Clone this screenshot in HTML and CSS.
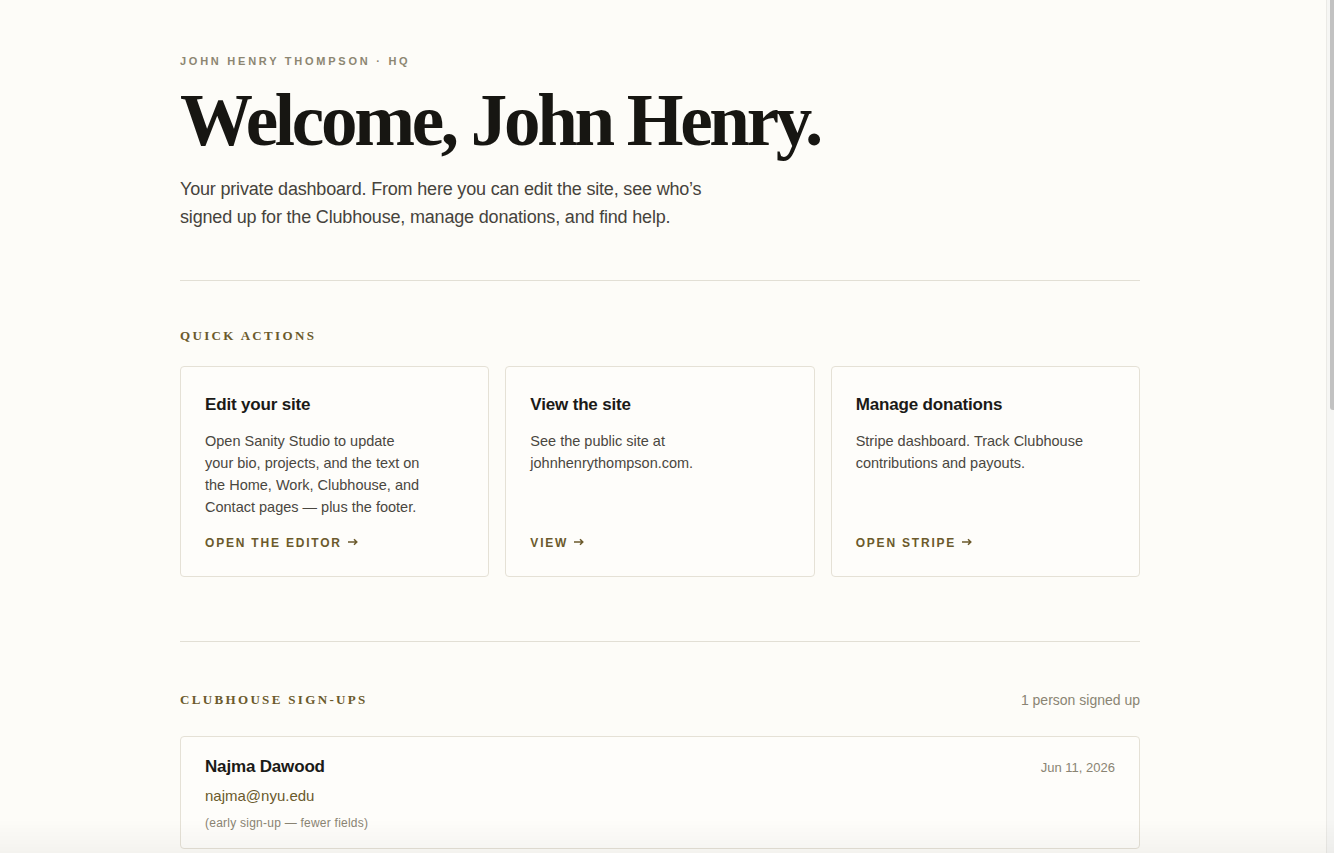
FILE: index.html
```html
<!DOCTYPE html>
<html lang="en">

<head>
    <meta charset="UTF-8">
    <title>HQ — John Henry Thompson</title>
    <link rel="stylesheet" href="styles.css">
</head>

<body>
    <main class="page">
        <!-- Intro -->
        <header class="intro">
            <p class="eyebrow">John Henry Thompson · HQ</p>
            <h1>Welcome, John Henry.</h1>
            <p class="lead">Your private dashboard. From here you can edit the site, see who’s signed up for the Clubhouse, manage donations, and find help.</p>
        </header>

        <!-- Quick actions -->
        <section class="section">
            <div class="section-head">
                <h2>Quick actions</h2>
            </div>
            <div class="actions">
                <a class="card card-edit" href="#">
                    <h3>Edit your site</h3>
                    <p>Open Sanity Studio to update your bio, projects, and the text on the Home, Work, Clubhouse, and Contact pages — plus the footer.</p>
                    <span class="card-link">Open the editor
                        <svg class="arrow" viewBox="0 0 10 8" width="10" height="8"><path d="M0 4h8.5M6 1.2 8.8 4 6 6.8" fill="none" stroke="currentColor" stroke-width="1.5"/></svg>
                    </span>
                </a>
                <a class="card" href="#">
                    <h3>View the site</h3>
                    <p>See the public site at johnhenrythompson.com.</p>
                    <span class="card-link">View
                        <svg class="arrow" viewBox="0 0 10 8" width="10" height="8"><path d="M0 4h8.5M6 1.2 8.8 4 6 6.8" fill="none" stroke="currentColor" stroke-width="1.5"/></svg>
                    </span>
                </a>
                <a class="card" href="#">
                    <h3>Manage donations</h3>
                    <p>Stripe dashboard. Track Clubhouse contributions and payouts.</p>
                    <span class="card-link">Open Stripe
                        <svg class="arrow" viewBox="0 0 10 8" width="10" height="8"><path d="M0 4h8.5M6 1.2 8.8 4 6 6.8" fill="none" stroke="currentColor" stroke-width="1.5"/></svg>
                    </span>
                </a>
            </div>
        </section>

        <!-- Clubhouse sign-ups -->
        <section class="section">
            <div class="section-head tall">
                <h2>Clubhouse sign-ups</h2>
                <span class="count">1 person signed up</span>
            </div>
            <ul class="signups">
                <li class="signup">
                    <div class="signup-top">
                        <h3>Najma Dawood</h3>
                        <span class="date">Jun 11, 2026</span>
                    </div>
                    <a class="email" href="#">najma@nyu.edu</a>
                    <p class="note">(early sign-up — fewer fields)</p>
                </li>
            </ul>
        </section>
    </main>

    <!-- window chrome: scrollbar + bottom shade -->
    <div class="scrollbar"><div class="thumb"></div></div>
    <div class="fade"></div>
</body>

</html>
```

FILE: styles.css
```css
html {
    background: #fdfcf8;
}

body {
    margin: 0;
    padding: 0 14px 0 0;
    font-family: "Liberation Sans", Arial, sans-serif;
    color: #1b1a17;
}

.page {
    max-width: 960px;
    margin: 0 auto;
    padding: 53px 0 900px;
}

/* Intro */
.intro {
    padding-bottom: 49px;
}

.eyebrow {
    margin: 0;
    font-size: 11px;
    line-height: 16px;
    font-weight: bold;
    letter-spacing: 0.25em;
    text-transform: uppercase;
    color: #8c8672;
}

h1 {
    margin: 10px 0 0;
    font-family: "Liberation Serif", "Times New Roman", serif;
    font-size: 73px;
    line-height: 84px;
    font-weight: bold;
    letter-spacing: -0.045em;
    color: #171612;
}

.lead {
    margin: 12px 0 0;
    max-width: 540px;
    font-size: 18px;
    line-height: 28px;
    letter-spacing: -0.01em;
    color: #46433c;
}

/* Sections */
.section {
    border-top: 1px solid #e2dfd5;
    padding: 46px 0 64px;
}

.section-head {
    display: flex;
    justify-content: space-between;
    align-items: center;
    margin-bottom: 21px;
}

.section-head.tall {
    min-height: 24px;
    margin-bottom: 24px;
}

h2 {
    margin: 0;
    font-family: "Liberation Serif", "Times New Roman", serif;
    font-size: 13px;
    line-height: 18px;
    font-weight: bold;
    letter-spacing: 0.18em;
    text-transform: uppercase;
    color: #6b5a2c;
}

.count {
    font-size: 14px;
    color: #8a8473;
}

/* Action cards */
.actions {
    display: grid;
    grid-template-columns: repeat(3, 1fr);
    gap: 16px;
}

.card {
    display: flex;
    flex-direction: column;
    padding: 26px 24px 25px;
    background: #fefdfa;
    border: 1px solid #e5e1d6;
    border-radius: 4px;
    text-decoration: none;
    color: inherit;
}

.card h3 {
    margin: 0;
    font-size: 17px;
    line-height: 24px;
    letter-spacing: -0.01em;
    color: #1b1a17;
}

.card p {
    margin: 13px 0 0;
    max-width: 230px;
    font-size: 14.5px;
    line-height: 22px;
    color: #4a473f;
}

.card-edit p {
    max-width: 216px;
}

.card-link {
    margin-top: auto;
    padding-top: 17px;
    font-size: 12px;
    line-height: 16px;
    font-weight: bold;
    letter-spacing: 0.15em;
    text-transform: uppercase;
    color: #6b5a2c;
}

.arrow {
    margin-left: 1px;
    vertical-align: 1px;
}

/* Sign-ups */
.signups {
    list-style: none;
    margin: 0;
    padding: 0;
}

.signup {
    padding: 18px 24px 16px;
    background: #fefdfa;
    border: 1px solid #e5e1d6;
    border-radius: 4px;
}

.signup-top {
    display: flex;
    justify-content: space-between;
    align-items: baseline;
}

.signup h3 {
    margin: 0;
    font-size: 17px;
    line-height: 24px;
    letter-spacing: -0.01em;
}

.date {
    font-size: 13px;
    color: #8a8473;
}

.email {
    display: block;
    margin-top: 6px;
    font-size: 15px;
    line-height: 22px;
    color: #6b5a2c;
    text-decoration: none;
}

.note {
    margin: 7px 0 0;
    font-size: 12px;
    line-height: 18px;
    letter-spacing: 0.02em;
    color: #8a8473;
}

/* browser scrollbar, drawn over the right edge */
.scrollbar {
    position: fixed;
    top: 0;
    right: 0;
    bottom: 0;
    width: 7px;
    background: #f6f6f4;
    border-left: 1px solid #ebeae6;
}

.thumb {
    margin-left: 3px;
    height: 410px;
    background: #c2c2c2;
    border-radius: 0 0 0 3px;
}

/* bottom shade over the fold */
.fade {
    position: fixed;
    left: 0;
    right: 0;
    bottom: 0;
    height: 34px;
    background: linear-gradient(to bottom, rgba(0, 0, 0, 0), rgba(0, 0, 0, 0.035));
    pointer-events: none;
}
```
